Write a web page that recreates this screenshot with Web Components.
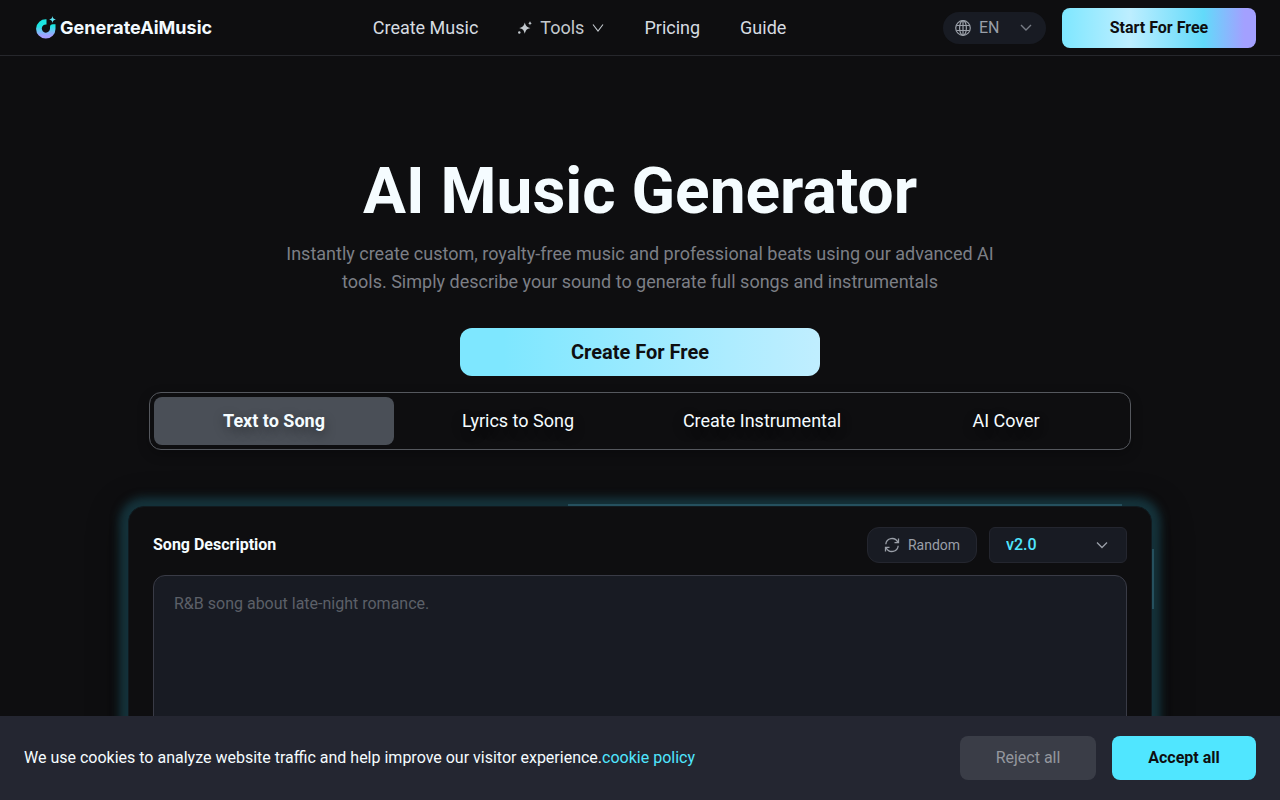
<!DOCTYPE html>
<html lang="en">
<head>
<meta charset="utf-8">
<meta name="viewport" content="width=device-width, initial-scale=1">
<title>AI Music Generator</title>
<style>
html{background:#0e0e10;scrollbar-width:none}
body{margin:0;font:16px/24px Roboto,"Liberation Sans",sans-serif;color:#f5fcff;
--aqua:#50e6ff;--panel:#181b23;--line:#24262f}
</style>
</head>
<body>
<site-header></site-header>
<main>
  <hero-banner>
    <span slot="title">AI Music Generator</span>
    <span slot="text">Instantly create custom, royalty-free music and professional beats using our advanced AI tools. Simply describe your sound to generate full songs and instrumentals</span>
    <span slot="action">Create For Free</span>
  </hero-banner>
  <mode-tabs></mode-tabs>
  <song-form></song-form>
</main>
<cookie-bar></cookie-bar>
<script>
const base = `<style>
*,*::before,*::after{box-sizing:border-box}
button,select,textarea{font:inherit;margin:0;border:0;cursor:pointer}
a{color:inherit;text-decoration:none}
svg{display:block;flex:none}
</style>`;
const define = (name, html) => customElements.define(name, class extends HTMLElement {
  constructor() {
    super();
    const t = document.createElement('template');
    t.innerHTML = base + html;
    this.attachShadow({ mode: 'open' }).append(t.content.cloneNode(true));
  }
});

define('brand-logo', `<style>
:host{display:block}
a{display:flex;align-items:center;gap:4px;padding-right:4px;font:700 18px/24px Inter,sans-serif;color:#f3faff}
</style>
<a href="#"><svg width="20" height="24" viewBox="0 0 20 24" aria-hidden="true">
<defs><linearGradient id="g" x1="0" y1="0" x2="0" y2="1"><stop offset=".35" stop-color="#1be5e0"/><stop offset=".6" stop-color="#6cc4f4"/><stop offset=".85" stop-color="#a3a0ff"/></linearGradient></defs>
<path fill="url(#g)" d="M10.500 3.200v5.300a4.100 4.100 0 1 0 3.500 4.200V11q0-2.800 2.800-2.800h2.700v4.500A9.700 9.700 0 1 1 10.500 3.200z"/>
<path fill="#5fe3f2" d="M16.500 0c.4 2.300 1.100 3 3.400 3.500-2.300.4-3 1.100-3.400 3.400-.4-2.300-1.100-3-3.400-3.400 2.300-.5 3-1.200 3.400-3.500z"/>
</svg><span>GenerateAiMusic</span></a>`);

define('site-header', `<style>
:host{display:block;border-bottom:1px solid #26272c}
header{display:flex;align-items:center;justify-content:space-between;height:55px;padding:0 24px 0 36px}
nav{display:flex;gap:40px;font-size:18px;line-height:28px;color:#d6dce1}
nav a{display:flex;align-items:center;gap:8px}
.tools{color:#c3c9ce}
.right{display:flex;align-items:center;gap:16px}
.start{width:194px;height:40px;border-radius:8px;font-weight:700;color:#0e0e10;background:linear-gradient(90deg,#7ee7ff,#bdeeff 35%,#62dafa 73%,#a3a0ff 94%)}
</style>
<header>
<brand-logo></brand-logo>
<nav aria-label="Main">
<a href="#create">Create Music</a>
<a href="#tools" class="tools"><svg width="14" height="14" viewBox="0 0 14 14" fill="currentColor" aria-hidden="true"><path d="M6.800 1.500c1 3.600 1.900 4.600 5.600 5.600-3.700 1-4.600 2-5.600 5.700-1-3.700-1.900-4.700-5.600-5.700 3.700-1 4.600-2 5.600-5.600z"/><path d="M12 0c.4 1.500.7 1.800 2 2.200-1.300.4-1.600.7-2 2.200-.4-1.500-.7-1.800-2-2.200 1.300-.4 1.600-.7 2-2.200z"/><circle cx="1.300" cy="11.500" r="1.200"/></svg>Tools<svg width="12" height="12" viewBox="0 0 12 12" fill="none" stroke="currentColor" stroke-width="1.100" aria-hidden="true"><path d="M1 2.500l5 6.500 5-6.500"/></svg></a>
<a href="#pricing">Pricing</a>
<a href="#guide">Guide</a>
</nav>
<div class="right"><lang-picker></lang-picker><button class="start" type="button">Start For Free</button></div>
</header>`);

define('lang-picker', `<style>
:host{display:block;width:103px}
label{display:grid;grid-template-columns:36px 1fr 28px;align-items:center;height:32px;border-radius:16px;background:var(--panel);color:#9a9fa8}
select{grid-area:1/1/2/4;width:100%;height:32px;padding:0 28px 0 36px;appearance:none;background:none;color:inherit;border-radius:16px}
svg{pointer-events:none}
.globe{grid-area:1/1/2/2;justify-self:end;margin-right:8px}
.chev{grid-area:1/3/2/4}
</style>
<label><select aria-label="Language"><option>EN</option></select>
<svg class="globe" width="16" height="16" viewBox="0 0 16 16" fill="none" stroke="currentColor" stroke-width="1.200" aria-hidden="true"><circle cx="8" cy="8" r="7.300"/><ellipse cx="8" cy="8" rx="3.400" ry="7.300"/><path d="M1.500 5.500h13M1.500 10.500h13M8 .7v14.600"/></svg>
<svg class="chev" width="16" height="12" viewBox="0 0 16 12" fill="none" stroke="#777c85" stroke-width="1.400" aria-hidden="true"><path d="M3 3l5 5 5-5"/></svg></label>`);

define('hero-banner', `<style>
:host{display:flex;flex-direction:column;align-items:center;padding:96px 24px 16px;text-align:center}
h1{margin:0 0 8px;font-size:64px;line-height:80px;font-weight:700}
p{margin:0 0 32px;max-width:736px;font-size:18px;line-height:28px;color:#7c7f86}
button{width:360px;max-width:100%;height:48px;border-radius:12px;font-size:20px;font-weight:700;color:#0e0e10;background:linear-gradient(90deg,#7ee7ff 12%,#c0eeff)}
</style>
<h1><slot name="title"></slot></h1>
<p><slot name="text"></slot></p>
<button type="button"><slot name="action"></slot></button>`);

define('mode-tabs', `<style>
:host{display:block;padding:0 24px}
div{display:grid;grid-template-columns:repeat(4,1fr);gap:4px;max-width:982px;margin:0 auto;padding:4px;border:1px solid #55585e;border-radius:12px;box-shadow:0 4px 12px rgba(0,0,0,.25)}
button{height:48px;border-radius:8px;background:none;color:inherit;font-size:18px;text-shadow:0 4px 12px rgba(0,0,0,.4)}
[aria-selected=true]{background:#4a4f57;font-weight:700}
</style>
<div role="tablist" aria-label="Mode">
<button role="tab" type="button" aria-selected="true">Text to Song</button>
<button role="tab" type="button" aria-selected="false">Lyrics to Song</button>
<button role="tab" type="button" aria-selected="false">Create Instrumental</button>
<button role="tab" type="button" aria-selected="false">AI Cover</button>
</div>`);

define('song-form', `<style>
:host{display:block;padding:56px 24px 120px}
form{position:relative;max-width:1024px;margin:0 auto;padding:20px 24px 24px;border:1px solid #111a1f;border-radius:16px;background:#0e0e10;
box-shadow:0 0 8px 9px rgba(22,56,66,.85),0 8px 32px 8px rgba(0,0,0,.35)}
form::before,form::after{content:"";position:absolute;background:#25505e}
form::before{top:-3px;left:43%;right:29px;height:2px}
form::after{right:-3px;top:42px;width:2px;height:60px}
.row{display:flex;align-items:center;gap:12px;margin-bottom:12px}
.row>label:first-child{margin-right:auto;font-weight:700}
.random{display:flex;align-items:center;justify-content:center;gap:8px;width:110px;height:36px;border:1px solid var(--line);border-radius:12px;background:var(--panel);color:#9a9fa8;font-size:14px}
.version{display:grid;grid-template-columns:1fr 32px;align-items:center;width:138px;color:#9a9fa8}
select{grid-area:1/1/2/3;width:100%;height:36px;padding:0 32px 0 16px;appearance:none;border:1px solid var(--line);border-radius:6px;background:var(--panel);color:var(--aqua);font-weight:500}
.version svg{grid-area:1/2/2/3;pointer-events:none}
textarea{display:block;width:100%;height:240px;padding:16px 20px;border:1px solid #393b46;border-radius:12px;background:var(--panel);color:#f5fcff;resize:none;cursor:text}
textarea::placeholder{color:#5c6068;opacity:1}
</style>
<form>
<div class="row"><label for="desc">Song Description</label>
<button class="random" type="button"><svg width="16" height="16" viewBox="0 0 16 16" fill="none" stroke="currentColor" stroke-width="1.300" aria-hidden="true"><path d="M1.800 7.200A6.300 6.300 0 0 1 13.700 5M14.500 1.500V5.600h-4M14.200 8.800A6.300 6.300 0 0 1 2.300 11M1.500 14.500v-4.100h4"/></svg>Random</button>
<label class="version"><select aria-label="Model version"><option>v2.0</option></select><svg width="14" height="12" viewBox="0 0 14 12" fill="none" stroke="currentColor" stroke-width="1.300" aria-hidden="true"><path d="M2 3.500l5 5 5-5"/></svg></label></div>
<textarea id="desc" placeholder="R&amp;B song about late-night romance."></textarea>
</form>`);

define('cookie-bar', `<style>
:host{position:fixed;left:0;right:0;bottom:0;display:flex;align-items:center;gap:16px;padding:20px 24px;background:#242631}
p{margin:0 auto 0 0}
a{color:var(--aqua)}
button{height:44px;border-radius:8px}
.no{width:136px;background:#3a3d47;color:#94979e}
.yes{width:144px;background:var(--aqua);color:#0e0e10;font-weight:700}
</style>
<p>We use cookies to analyze website traffic and help improve our visitor experience.<a href="#policy">cookie policy</a></p>
<button class="no" type="button">Reject all</button>
<button class="yes" type="button">Accept all</button>`);
</script>
</body>
</html>
